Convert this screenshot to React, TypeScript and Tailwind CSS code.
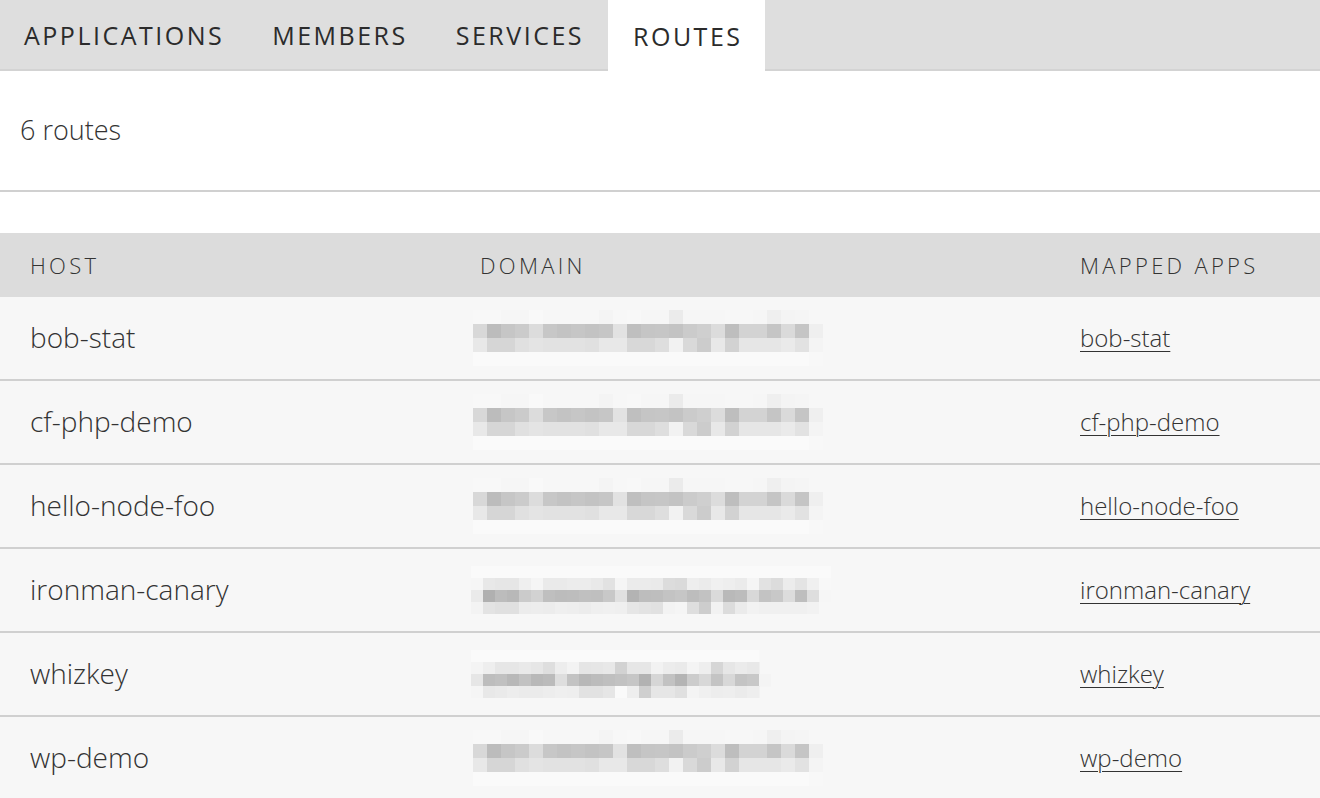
import React from "react";

type Mosaic = { size: number; offsetX: number; rows: string[][] };

const A: Mosaic = {
  size: 14,
  offsetX: -7,
  rows: [
    "f8 f8 f6 f6 f9 f7 f7 f7 f7 f4 f7 f8 f6 f6 eb f6 f6 f6 f7 f7 f6 ef f4 f5 f7".split(" "),
    "d8 bc c6 cb dc c7 c3 c6 c3 c6 e2 bf c5 c6 c3 cb cf dc be d3 d3 c5 da c5 ef".split(" "),
    "e8 d6 d6 e0 e4 e2 e2 e2 e0 e8 e8 d8 d8 de f2 d9 cc e8 d2 e6 e6 e6 ea e2 f4".split(" "),
    "fa fa fa fa fa fa fa fa fa fa fa fa fa fa fa fa fa fa fa fa fa fa fa fa f8".split(" "),
  ],
};

const B: Mosaic = {
  size: 12,
  offsetX: -9,
  rows: [
    "fa fa fa fa fa fa fa fa fa fa fa fa fa fa fa fa fa fa fa fa fa fa fa fa fa fa fa fa fa fa".split(" "),
    "f6 e8 e6 e6 ef f5 ea ea ec ec e9 e2 f5 eb eb ea dc da ee eb f0 ee eb f5 e2 dc ec e4 f0 f8".split(" "),
    "ea b0 bc b8 cb d2 bf bc bd c0 bf c8 e0 b3 bd be c3 c6 bd c2 da b9 bc d8 c3 c8 dc be de f6".split(" "),
    "f3 e3 e0 e0 ec ed ec ef ee ec ef f0 ef e6 e3 e1 f3 f5 de cd f2 dc eb f2 f0 f0 f0 f0 f2 f7".split(" "),
  ],
};

const C: Mosaic = {
  size: 12,
  offsetX: -9,
  rows: [
    "fa fa fa fa fa fa fa fa fa fa fa fa fa fa fa fa fa fa fa fa fa fa fa fa".split(" "),
    "f4 ee e6 e6 e9 e6 de ed f3 e5 e6 e8 d2 e6 e6 f2 ec ea f4 ee d6 e6 eb e8".split(" "),
    "e6 bd c0 b8 c2 b8 bb de c3 b8 bc bf c2 c6 b2 d6 c2 b4 cc d8 c4 d8 c4 c8 f4".split(" "),
    "f5 e8 ea ed eb eb ed ef ee e2 e2 e6 fa ee cf e6 e6 e0 f4 f0 ed ee eb ee".split(" "),
  ],
};

function Blur({ m }: { m: Mosaic }) {
  const cols = Math.max(...m.rows.map((r) => r.length));
  const w = cols * m.size;
  const h = m.rows.length * m.size;
  return (
    <svg
      width={w}
      height={h}
      viewBox={`0 0 ${w} ${h}`}
      style={{ marginLeft: m.offsetX, filter: "blur(0.6px)" }}
      className="block"
    >
      {m.rows.map((row, ri) =>
        row.map((c, ci) => (
          <rect
            key={`${ri}-${ci}`}
            x={ci * m.size}
            y={ri * m.size}
            width={m.size + 0.5}
            height={m.size + 0.5}
            fill={`#${c}${c}${c}`}
          />
        ))
      )}
    </svg>
  );
}

const routes: { host: string; m: Mosaic }[] = [
  { host: "bob-stat", m: A },
  { host: "cf-php-demo", m: A },
  { host: "hello-node-foo", m: A },
  { host: "ironman-canary", m: B },
  { host: "whizkey", m: C },
  { host: "wp-demo", m: A },
];

const tabs = ["APPLICATIONS", "MEMBERS", "SERVICES", "ROUTES"];

export default function App() {
  return (
    <div
      className="w-[1320px] h-[798px] overflow-hidden bg-white text-[#333333]"
      style={{ fontFamily: '"Open Sans", "Liberation Sans", sans-serif' }}
    >
      {/* Tabs */}
      <div className="flex h-[71px] bg-[#dedede] border-b-2 border-[#d3d3d3]">
        {tabs.map((t) => {
          const active = t === "ROUTES";
          return (
            <div
              key={t}
              className={
                active
                  ? "h-[71px] bg-white pl-[25px] pr-[22px] pt-[2px] flex items-center text-[25px] tracking-[2.5px] font-normal text-[#2b2b2b]"
                  : "h-[69px] pl-6 pr-[24px] pt-[2px] flex items-center text-[25px] tracking-[2.5px] font-normal text-[#2b2b2b]"
              }
            >
              {t}
            </div>
          );
        })}
      </div>

      {/* Count */}
      <div className="h-[121px] flex items-center pl-5 border-b-2 border-[#d0d0d0] text-[27px] font-light text-[#333]">
        6 routes
      </div>

      <div className="h-[41px]" />

      {/* Table header */}
      <div className="grid grid-cols-[450px_600px_1fr] pl-[30px] h-[64px] items-center bg-[#dcdcdc] text-[22px] tracking-[3.3px] font-light text-[#333]">
        <div>HOST</div>
        <div>DOMAIN</div>
        <div>MAPPED APPS</div>
      </div>

      {routes.map((r) => (
        <div
          key={r.host}
          className="grid grid-cols-[450px_600px_1fr] pl-[30px] h-[84px] items-center bg-[#f7f7f7] border-b-2 border-[#d0d0d0]"
        >
          <div className="text-[28px] font-light text-[#333] pb-[3px]">{r.host}</div>
          <div className="flex items-center">
            <Blur m={r.m} />
          </div>
          <div className="text-[24px] font-light text-[#333] underline underline-offset-[4px] decoration-1">
            {r.host}
          </div>
        </div>
      ))}
    </div>
  );
}
